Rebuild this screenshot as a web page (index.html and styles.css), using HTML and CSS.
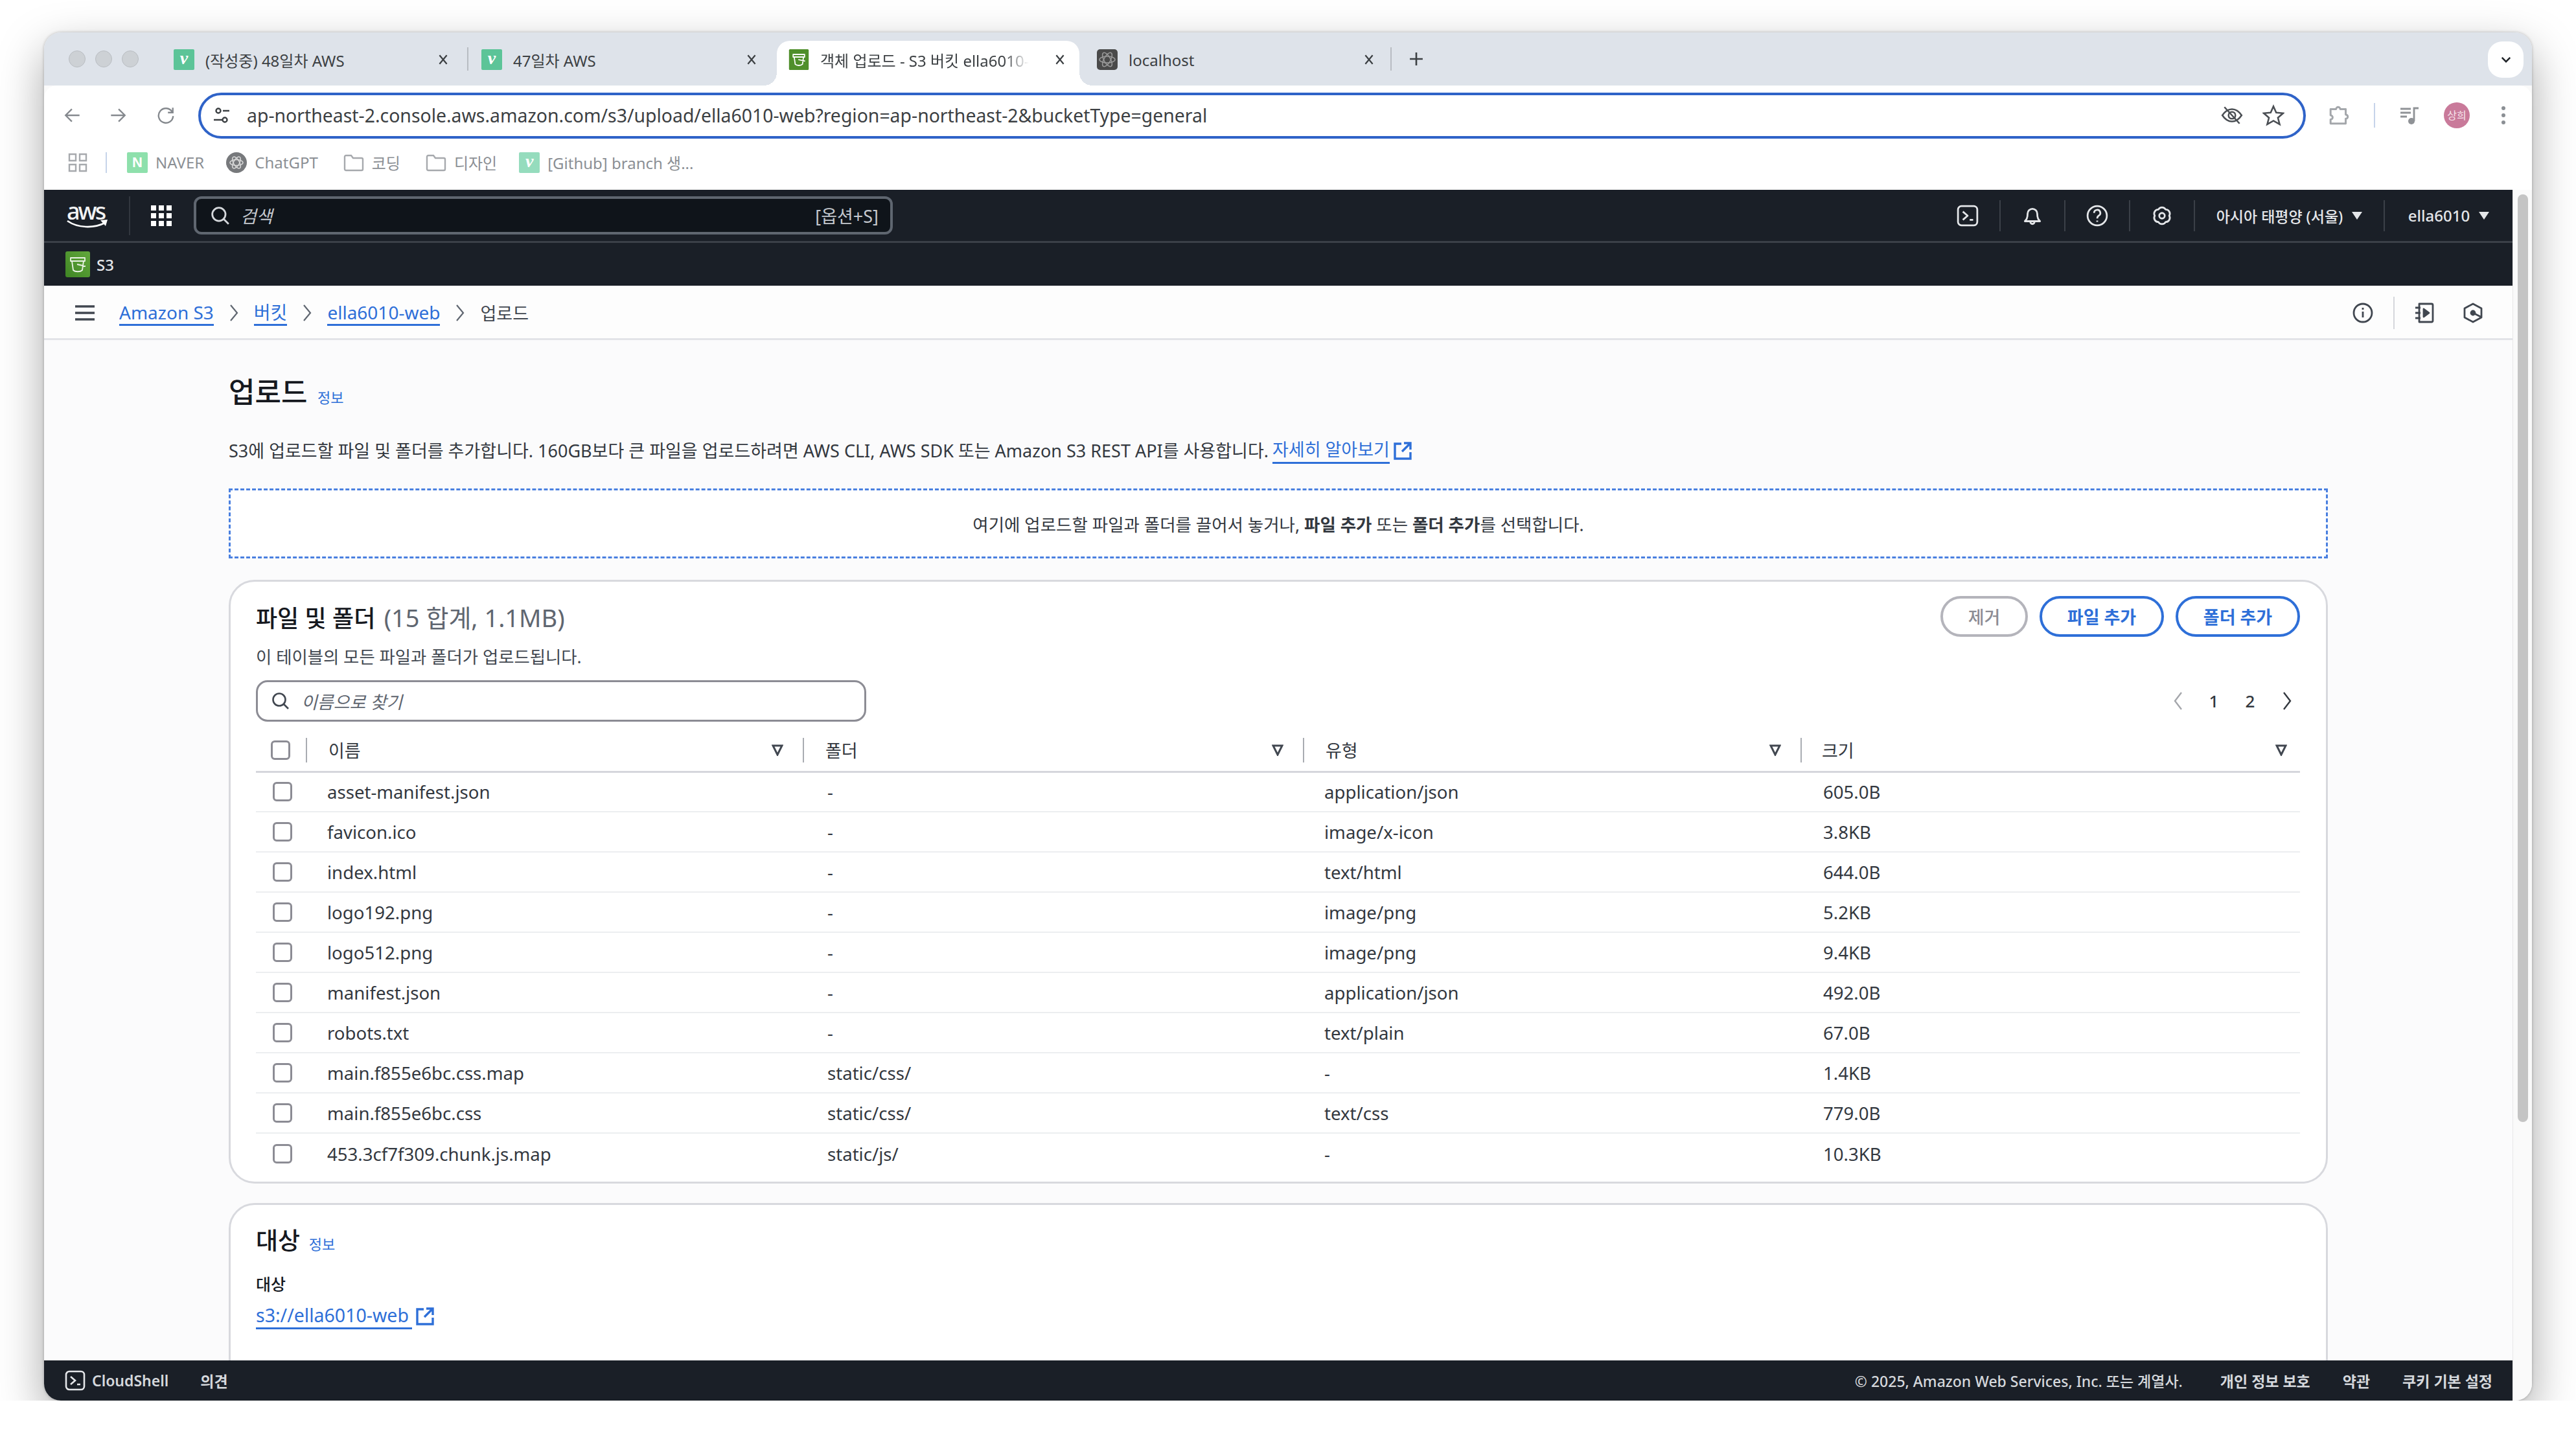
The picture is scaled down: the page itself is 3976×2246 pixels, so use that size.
FILE: index.html
```html
<!DOCTYPE html>
<html lang="ko">
<head>
    <meta charset="UTF-8">
    <title>객체 업로드 - S3 버킷 ella6010-web</title>
    <link rel="stylesheet" href="styles.css">
</head>
<body>

<div class="window">
    <!-- Browser tabs -->
    <div class="tabbar">
        <div class="lights"><span></span><span></span><span></span></div>
        <div class="tab tab-first">
            <span class="fav fav-v">v</span><span class="tab-title">(작성중) 48일차 AWS</span>
            <svg class="tab-x" viewBox="0 0 16 16"><path d="M3 2l10 12M13 2L3 14"/></svg>
        </div>
        <div class="tab-sep"></div>
        <div class="tab tab-second">
            <span class="fav fav-v">v</span><span class="tab-title">47일차 AWS</span>
            <svg class="tab-x" viewBox="0 0 16 16"><path d="M3 2l10 12M13 2L3 14"/></svg>
        </div>
        <div class="tab tab-active">
            <svg class="fav" viewBox="0 0 38 40"><rect width="38" height="40" rx="2" fill="#4f8f2b"/><path d="M8 10h22v5H8zM10 15l2 14c3 3 11 3 14 0l2-14M18 20l13 3" fill="none" stroke="#fff" stroke-width="2.200" stroke-linejoin="round"/></svg>
            <span class="tab-title tab-fade">객체 업로드 - S3 버킷 ella6010-</span>
            <svg class="tab-x" viewBox="0 0 16 16"><path d="M3 2l10 12M13 2L3 14"/></svg>
        </div>
        <div class="tab tab-last">
            <svg class="fav" viewBox="0 0 32 32"><rect width="32" height="32" rx="5" fill="#4a4a4a"/><g fill="none" stroke="#9a9a9a" stroke-width="1.500"><ellipse cx="16" cy="16" rx="12" ry="5"/><ellipse cx="16" cy="16" rx="12" ry="5" transform="rotate(60 16 16)"/><ellipse cx="16" cy="16" rx="12" ry="5" transform="rotate(120 16 16)"/></g></svg>
            <span class="tab-title">localhost</span>
            <svg class="tab-x" viewBox="0 0 16 16"><path d="M3 2l10 12M13 2L3 14"/></svg>
        </div>
        <div class="tab-sep"></div>
        <svg class="tab-plus" viewBox="0 0 20 20"><path d="M10 1v18M1 10h18"/></svg>
        <div class="tab-menu"><svg viewBox="0 0 16 16"><path d="M3 5.500l5 5 5-5"/></svg></div>
    </div>

    <!-- Toolbar with address bar -->
    <div class="toolbar">
        <svg class="tool-ico arrow" viewBox="0 0 28 28"><path d="M24 14H5M13 5l-9 9 9 9"/></svg>
        <svg class="tool-ico arrow" viewBox="0 0 28 28"><path d="M4 14h19M15 5l9 9-9 9"/></svg>
        <svg class="tool-ico reload" viewBox="0 0 28 28"><path d="M23 9a10.500 10.500 0 1 0 1.500 6M24 3v7h-7"/></svg>
        <div class="addressbar">
            <svg class="tune" viewBox="0 0 28 28"><circle cx="9" cy="7" r="3.500"/><circle cx="19" cy="21" r="3.500"/><path d="M16 7h10M2 21h13"/></svg>
            <span class="url">ap-northeast-2.console.aws.amazon.com/s3/upload/ella6010-web?region=ap-northeast-2&amp;bucketType=general</span>
            <svg class="addr-ico" viewBox="0 0 32 32"><path d="M2 16c4-6 9-9 14-9s10 3 14 9c-4 6-9 9-14 9S6 22 2 16z"/><circle cx="16" cy="16" r="5"/><path d="M5 4l22 24"/></svg>
            <svg class="addr-ico addr-star" viewBox="0 0 32 32"><path d="M16 3l4 9 10 1-7.500 6.500L25 29l-9-5-9 5 2.500-9.500L2 13l10-1z"/></svg>
        </div>
        <svg class="tool-ico puzzle" viewBox="0 0 32 32"><path d="M3 7h8a3 3 0 0 1 6 0h8v8a3 3 0 0 1 0 6v7H3v-6a3 3 0 0 0 0-6z"/></svg>
        <div class="tool-sep"></div>
        <svg class="tool-ico media" viewBox="0 0 32 32"><path d="M1 6h16M1 12h16M1 18h10M22 25V5h7"/><circle cx="18" cy="25" r="5" fill="#8f9296" stroke="none"/></svg>
        <div class="avatar">상희</div>
        <div class="dots"><span></span><span></span><span></span></div>
    </div>

    <!-- Bookmarks -->
    <div class="bookmarks">
        <svg class="bm-grid" viewBox="0 0 30 30"><path d="M2 2h10v10H2zM18 2h10v10H18zM2 18h10v10H2zM18 18h10v10H18z"/></svg>
        <div class="bm-sep"></div>
        <span class="bm"><span class="fav fav-n">N</span>NAVER</span>
        <span class="bm"><svg class="fav" viewBox="0 0 32 32"><circle cx="16" cy="16" r="16" fill="#77797c"/><g fill="none" stroke="#d8d8d8" stroke-width="1.500"><ellipse cx="16" cy="16" rx="10" ry="4.500"/><ellipse cx="16" cy="16" rx="10" ry="4.500" transform="rotate(60 16 16)"/><ellipse cx="16" cy="16" rx="10" ry="4.500" transform="rotate(120 16 16)"/></g></svg>ChatGPT</span>
        <span class="bm bm-dir"><svg class="bm-folder" viewBox="0 0 32 28"><path d="M2 5a2 2 0 0 1 2-2h8l3 4h13a2 2 0 0 1 2 2v15a2 2 0 0 1-2 2H4a2 2 0 0 1-2-2z"/></svg>코딩</span>
        <span class="bm bm-dir"><svg class="bm-folder" viewBox="0 0 32 28"><path d="M2 5a2 2 0 0 1 2-2h8l3 4h13a2 2 0 0 1 2 2v15a2 2 0 0 1-2 2H4a2 2 0 0 1-2-2z"/></svg>디자인</span>
        <span class="bm"><span class="fav fav-v fav-pale">v</span>[Github] branch 생...</span>
    </div>

    <!-- AWS console nav -->
    <div class="aws-top">
        <div class="aws-logo">aws<svg viewBox="0 0 64 16"><path d="M1 2c16 11 40 12 58 3" fill="none" stroke="#fff" stroke-width="2.600"/><path d="M52 1l11-1-3 10z" fill="#fff"/></svg></div>
        <div class="nav-rule"></div>
        <svg class="apps" viewBox="0 0 32 32"><path d="M0 0h8v8H0zM12 0h8v8h-8zM24 0h8v8h-8zM0 12h8v8H0zM12 12h8v8h-8zM24 12h8v8h-8zM0 24h8v8H0zM12 24h8v8h-8zM24 24h8v8h-8z"/></svg>
        <div class="aws-search">
            <svg class="search-ico" viewBox="0 0 28 28"><circle cx="12" cy="12" r="9.500"/><path d="M19 19l7 7"/></svg>
            <em>검색</em>
            <span class="shortcut">[옵션+S]</span>
        </div>
        <div class="nav-right">
            <div class="nav-item"><svg class="nav-ico" viewBox="0 0 32 32"><rect x="2" y="2" width="28" height="28" rx="5"/><path d="M9 10l7 6-7 6M19 22h5"/></svg></div>
            <div class="nav-item"><svg class="nav-ico" viewBox="0 0 32 32"><path d="M5 24c2-2 4-4 4-11a7 7 0 0 1 14 0c0 7 2 9 4 11zM13 24v1a3 3 0 0 0 6 0v-1"/></svg></div>
            <div class="nav-item"><svg class="nav-ico" viewBox="0 0 32 32"><circle cx="16" cy="16" r="14"/><path d="M11.500 12a4.500 4.500 0 1 1 6.500 4c-1.500 1-2 2-2 4M16 23v2"/></svg></div>
            <div class="nav-item"><svg class="nav-ico" viewBox="0 0 32 32"><path d="M10.750 6.900A6 6 0 0 1 21.250 6.900A6 6 0 0 1 26.500 16A6 6 0 0 1 21.250 25.100A6 6 0 0 1 10.750 25.100A6 6 0 0 1 5.500 16A6 6 0 0 1 10.750 6.900z"/><circle cx="16" cy="16" r="4"/></svg></div>
            <div class="nav-item nav-region">아시아 태평양 (서울)<i class="caret"></i></div>
            <div class="nav-item nav-user">ella6010<i class="caret"></i></div>
        </div>
    </div>
    <div class="aws-service">
        <svg class="s3-ico" viewBox="0 0 38 40"><defs><linearGradient id="s3green" x1="0" y1="1" x2="1" y2="0"><stop offset="0" stop-color="#3f8624"/><stop offset="1" stop-color="#62a83c"/></linearGradient></defs><rect width="38" height="40" rx="3" fill="url(#s3green)"/><path d="M8 10h22v5H8zM10 15l2 14c3 3 11 3 14 0l2-14M18 20l13 3" fill="none" stroke="#e9f2e4" stroke-width="1.800" stroke-linejoin="round"/></svg>
        <span>S3</span>
    </div>

    <!-- Breadcrumb -->
    <div class="crumbs">
        <svg class="burger" viewBox="0 0 30 24"><path d="M0 2h30M0 12h30M0 22h30"/></svg>
        <a class="crumb-link">Amazon S3</a>
        <svg class="crumb-arrow" viewBox="0 0 14 28"><path d="M2 2l10 12L2 26"/></svg>
        <a class="crumb-link">버킷</a>
        <svg class="crumb-arrow" viewBox="0 0 14 28"><path d="M2 2l10 12L2 26"/></svg>
        <a class="crumb-link">ella6010-web</a>
        <svg class="crumb-arrow" viewBox="0 0 14 28"><path d="M2 2l10 12L2 26"/></svg>
        <span class="crumb-now">업로드</span>
        <div class="crumb-tools">
            <svg class="crumb-ico" viewBox="0 0 32 32"><circle cx="16" cy="16" r="14"/><path d="M16 14v9M16 8v3"/></svg>
            <div class="crumb-sep"></div>
            <svg class="crumb-ico" viewBox="0 0 32 32"><path d="M8 2h19a2 2 0 0 1 2 2v24a2 2 0 0 1-2 2H8zM2 8h8M2 16h8M2 24h8"/><path d="M15 10l8 6-8 6z" fill="#414750"/></svg>
            <svg class="crumb-ico" viewBox="0 0 32 32"><path d="M16 2l13 7v14l-13 7-13-7V9z"/><path d="M16 16l12 6"/><circle cx="16" cy="16" r="3" fill="#414750"/></svg>
        </div>
    </div>

    <div class="body-wrap">
        <div class="main">
            <h1 class="page-title">업로드 <a class="info">정보</a></h1>
            <p class="page-desc">S3에 업로드할 파일 및 폴더를 추가합니다. 160GB보다 큰 파일을 업로드하려면 AWS CLI, AWS SDK 또는 Amazon S3 REST API를 사용합니다. <a class="link">자세히 알아보기</a><svg class="ext" viewBox="0 0 30 30"><path d="M13 4H3v23h24V17M17 3h10v10M27 3L14 16"/></svg></p>

            <div class="dropzone">여기에 업로드할 파일과 폴더를 끌어서 놓거나,&nbsp;<b>파일 추가</b>&nbsp;또는&nbsp;<b>폴더 추가</b>를 선택합니다.</div>

            <div class="card files-card">
                <div class="card-head">
                    <div>
                        <h2 class="card-title">파일 및 폴더 <span>(15 합계, 1.1MB)</span></h2>
                        <p class="card-desc">이 테이블의 모든 파일과 폴더가 업로드됩니다.</p>
                    </div>
                    <div class="card-actions">
                        <button class="btn btn-off">제거</button>
                        <button class="btn">파일 추가</button>
                        <button class="btn">폴더 추가</button>
                    </div>
                </div>

                <div class="filter-row">
                    <div class="filter">
                        <svg class="filter-ico" viewBox="0 0 28 28"><circle cx="12" cy="12" r="9.500"/><path d="M19 19l7 7"/></svg>
                        <em>이름으로 찾기</em>
                    </div>
                    <div class="pager">
                        <svg class="pager-arrow off" viewBox="0 0 16 30"><path d="M13 2L3 15l10 13"/></svg>
                        <span>1</span>
                        <span>2</span>
                        <svg class="pager-arrow" viewBox="0 0 16 30"><path d="M3 2l10 13L3 28"/></svg>
                    </div>
                </div>

                <table class="file-table">
                    <colgroup>
                        <col class="col-check"><col class="col-name"><col class="col-folder"><col class="col-type"><col>
                    </colgroup>
                    <thead>
                        <tr>
                            <th><span class="check head-check"></span></th>
                            <th><div class="th-cell">이름<svg class="sort" viewBox="0 0 18 18"><path d="M2 2h14L9 16z"/></svg></div></th>
                            <th><div class="th-cell">폴더<svg class="sort" viewBox="0 0 18 18"><path d="M2 2h14L9 16z"/></svg></div></th>
                            <th><div class="th-cell">유형<svg class="sort" viewBox="0 0 18 18"><path d="M2 2h14L9 16z"/></svg></div></th>
                            <th><div class="th-cell th-last">크기<svg class="sort" viewBox="0 0 18 18"><path d="M2 2h14L9 16z"/></svg></div></th>
                        </tr>
                    </thead>
                    <tbody>
                        <tr><td><span class="check"></span></td><td>asset-manifest.json</td><td>-</td><td>application/json</td><td>605.0B</td></tr>
                        <tr><td><span class="check"></span></td><td>favicon.ico</td><td>-</td><td>image/x-icon</td><td>3.8KB</td></tr>
                        <tr><td><span class="check"></span></td><td>index.html</td><td>-</td><td>text/html</td><td>644.0B</td></tr>
                        <tr><td><span class="check"></span></td><td>logo192.png</td><td>-</td><td>image/png</td><td>5.2KB</td></tr>
                        <tr><td><span class="check"></span></td><td>logo512.png</td><td>-</td><td>image/png</td><td>9.4KB</td></tr>
                        <tr><td><span class="check"></span></td><td>manifest.json</td><td>-</td><td>application/json</td><td>492.0B</td></tr>
                        <tr><td><span class="check"></span></td><td>robots.txt</td><td>-</td><td>text/plain</td><td>67.0B</td></tr>
                        <tr><td><span class="check"></span></td><td>main.f855e6bc.css.map</td><td>static/css/</td><td>-</td><td>1.4KB</td></tr>
                        <tr><td><span class="check"></span></td><td>main.f855e6bc.css</td><td>static/css/</td><td>text/css</td><td>779.0B</td></tr>
                        <tr><td><span class="check"></span></td><td>453.3cf7f309.chunk.js.map</td><td>static/js/</td><td>-</td><td>10.3KB</td></tr>
                    </tbody>
                </table>
            </div>

            <div class="card dest-card">
                <h2 class="dest-title">대상 <a class="info">정보</a></h2>
                <div class="dest-label">대상</div>
                <div class="dest-value"><a class="link">s3://ella6010-web</a><svg class="ext" viewBox="0 0 30 30"><path d="M13 4H3v23h24V17M17 3h10v10M27 3L14 16"/></svg></div>
            </div>
        </div>
    </div>

    <!-- Console footer -->
    <div class="footer">
        <svg class="foot-ico" viewBox="0 0 32 32"><rect x="2" y="2" width="28" height="28" rx="5"/><path d="M9 10l7 6-7 6M19 22h5"/></svg>
        <span class="foot-shell">CloudShell</span>
        <span class="foot-feedback">의견</span>
        <div class="foot-right">
            <span>© 2025, Amazon Web Services, Inc. 또는 계열사.</span>
            <span class="foot-strong foot-gap">개인 정보 보호</span>
            <span class="foot-strong">약관</span>
            <span class="foot-strong">쿠키 기본 설정</span>
        </div>
    </div>

    <div class="scrollbar"><div class="scroll-thumb"></div></div>
</div>

</body>
</html>
```

FILE: styles.css
```css
/* Basic Reset */
* {
    margin: 0;
    padding: 0;
    box-sizing: border-box;
}

body {
    font-family: "Noto Sans", "Noto Sans CJK KR", sans-serif;
    background-color: #fff;
    color: #16191f;
    padding: 50px 68px 0;
}

svg {
    display: block;
    flex: none;
    fill: none;
}

/* Browser window */
.window {
    position: relative;
    display: flex;
    flex-direction: column;
    width: 3840px;
    height: 2112px;
    border-radius: 26px;
    overflow: hidden;
    background-color: #fafafa;
    box-shadow: 0 28px 70px rgba(0, 0, 0, 0.35), 0 0 4px rgba(0, 0, 0, 0.25);
}

.tabbar {
    display: flex;
    height: 82px;
    padding-top: 13px;
    background-color: #dee3ea;
    flex: none;
}

.lights {
    display: flex;
    gap: 15px;
    width: 182px;
    padding: 15px 0 0 38px;
}

.lights span {
    width: 26px;
    height: 26px;
    border-radius: 50%;
    background-color: #cdd1d5;
    border: 1px solid #b9bdc2;
}

.tab {
    position: relative;
    display: flex;
    align-items: center;
    padding: 0 18px 11px;
    font-size: 24px;
    color: #3c4043;
}

.tab-first { width: 471px; padding-right: 27px; }
.tab-second { width: 476px; padding-right: 29px; padding-left: 20px; }
.tab-active {
    width: 467px;
    background-color: #fff;
    border-radius: 20px 20px 0 0;
    margin-right: 9px;
    padding-right: 20px;
}
.tab-last { width: 471px; padding-right: 23px; }

.tab-active::before,
.tab-active::after {
    content: "";
    position: absolute;
    bottom: 0;
    width: 20px;
    height: 20px;
}

.tab-active::before {
    left: -20px;
    background: radial-gradient(circle at 0 0, transparent 20px, #fff 20px);
}

.tab-active::after {
    right: -20px;
    background: radial-gradient(circle at 100% 0, transparent 20px, #fff 20px);
}

.tab-sep {
    width: 2px;
    height: 36px;
    margin-top: 10px;
    background-color: #b8bcc2;
    flex: none;
}

.fav {
    width: 32px;
    height: 32px;
    flex: none;
}

.fav-v, .fav-n {
    display: block;
    background-color: #5cc498;
    color: #fff;
    border-radius: 2px;
    text-align: center;
    font-family: "Liberation Serif", serif;
    font-style: italic;
    font-weight: 700;
    font-size: 28px;
    line-height: 28px;
}

.fav-n {
    background-color: #8ee0ac;
    font-family: "Liberation Sans", sans-serif;
    font-style: normal;
    font-size: 22px;
    line-height: 32px;
}

.fav-pale {
    background-color: #95dcbd;
}

.tab-title {
    flex: 1;
    margin-left: 17px;
    white-space: nowrap;
}

.tab-fade {
    -webkit-mask-image: linear-gradient(to right, #000 88%, transparent 100%);
    mask-image: linear-gradient(to right, #000 88%, transparent 100%);
    flex: none;
    margin-right: auto;
}

.tab-x {
    width: 18px;
    height: 18px;
    stroke: #3c4043;
    stroke-width: 2;
    margin-right: 1px;
}

.tab-plus {
    width: 22px;
    height: 22px;
    margin: 17px 0 0 27px;
    stroke: #3c4043;
    stroke-width: 2.400;
}

.tab-menu {
    display: flex;
    align-items: center;
    justify-content: center;
    width: 55px;
    height: 56px;
    margin: 1px 13px 0 auto;
    background-color: #fff;
    border-radius: 22px;
}

.tab-menu svg {
    width: 20px;
    height: 20px;
    stroke: #1f2328;
    stroke-width: 2;
}

/* Toolbar */
.toolbar {
    display: flex;
    align-items: center;
    height: 82px;
    margin-top: 0;
    padding: 10px 0 0;
    background-color: #fff;
    border-radius: 20px 20px 0 0;
    flex: none;
}

.tool-ico {
    stroke: #85898e;
    stroke-width: 2.200;
}

.arrow {
    width: 30px;
    height: 30px;
}

.arrow:first-child {
    margin-left: 29px;
    margin-right: 40px;
}

.reload {
    width: 30px;
    height: 30px;
    margin-left: 44px;
}

.addressbar {
    display: flex;
    align-items: center;
    width: 3253px;
    height: 71px;
    margin-left: 35px;
    padding: 0 29px 0 18px;
    border: 4px solid #2f63c8;
    border-radius: 36px;
}

.tune {
    width: 28px;
    height: 28px;
    stroke: #3c4043;
    stroke-width: 2.400;
}

.url {
    flex: 1;
    margin-left: 25px;
    font-size: 28.400px;
    color: #3c4043;
    white-space: nowrap;
}

.addr-ico {
    width: 34px;
    height: 34px;
    stroke: #4b4f54;
    stroke-width: 2.400;
}

.addr-star {
    margin-left: 30px;
}

.puzzle {
    width: 34px;
    height: 34px;
    margin-left: 35px;
    stroke: #a4a7ab;
    stroke-width: 2.800;
    stroke-linejoin: round;
}

.tool-sep {
    width: 2px;
    height: 38px;
    margin-left: 36px;
    background-color: #c6d4ea;
}

.media {
    width: 32px;
    height: 34px;
    margin-left: 38px;
    stroke: #8f9296;
    stroke-width: 2.800;
}

.avatar {
    width: 40px;
    height: 40px;
    margin-left: 36px;
    border-radius: 50%;
    background-color: #c97a9a;
    color: #f7e4ec;
    font-size: 16px;
    line-height: 40px;
    text-align: center;
}

.dots {
    display: flex;
    flex-direction: column;
    gap: 5px;
    margin-left: 49px;
}

.dots span {
    width: 6px;
    height: 6px;
    border-radius: 50%;
    background-color: #8b8f94;
}

/* Bookmarks */
.bookmarks {
    display: flex;
    align-items: center;
    height: 79px;
    padding-bottom: 6px;
    background-color: #fff;
    font-size: 24px;
    color: #8b8f94;
    flex: none;
}

.bm-grid {
    width: 30px;
    height: 30px;
    margin-left: 37px;
    stroke: #a6a9ad;
    stroke-width: 2.400;
}

.bm-sep {
    width: 2px;
    height: 32px;
    margin: 0 31px 0 28px;
    background-color: #c6d4ea;
}

.bm {
    display: flex;
    align-items: center;
    gap: 12px;
    margin-right: 34px;
    white-space: nowrap;
}

.bm-dir {
    margin-left: 5px;
}

.bm-folder {
    width: 32px;
    height: 30px;
    stroke: #a6a9ad;
    stroke-width: 2.400;
}

/* AWS console nav */
.aws-top {
    display: flex;
    align-items: center;
    height: 82px;
    width: 3810px;
    background-color: #1a1f27;
    border-bottom: 3px solid #3b4048;
    color: #e4e6e9;
    flex: none;
}

.aws-logo {
    position: relative;
    width: 64px;
    height: 40px;
    margin-left: 35px;
    font-size: 36px;
    font-weight: 500;
    line-height: 26px;
    letter-spacing: -3px;
    color: #f2f3f4;
}

.aws-logo svg {
    width: 64px;
    height: 16px;
}

.nav-rule {
    width: 2px;
    height: 60px;
    margin-left: 32px;
    background-color: #31363e;
}

.apps {
    width: 32px;
    height: 32px;
    margin-left: 32px;
    fill: #fff;
}

.aws-search {
    display: flex;
    align-items: center;
    width: 1079px;
    height: 59px;
    margin-left: 34px;
    padding: 0 18px 0 22px;
    background-color: #0f141a;
    border: 4px solid #5f6670;
    border-radius: 12px;
    font-size: 27px;
    color: #c4c8ce;
}

.search-ico {
    width: 30px;
    height: 30px;
    stroke: #d5d8dc;
    stroke-width: 2.600;
}

.aws-search em {
    flex: 1;
    margin-left: 16px;
}

.nav-right {
    display: flex;
    align-items: center;
    height: 48px;
    margin-left: auto;
}

.nav-item {
    display: flex;
    align-items: center;
    justify-content: center;
    width: 100px;
    height: 48px;
    border-right: 2px solid #3b4048;
    font-size: 24px;
    font-weight: 500;
}

.nav-ico {
    width: 34px;
    height: 34px;
    stroke: #e4e6e9;
    stroke-width: 2.600;
    stroke-linejoin: round;
}

.nav-region {
    width: 293px;
    font-size: 23px;
    white-space: nowrap;
}

.nav-user {
    width: 197px;
    border-right: 0;
}

.caret {
    width: 0;
    height: 0;
    margin-left: 14px;
    border-left: 8px solid transparent;
    border-right: 8px solid transparent;
    border-top: 12px solid #e4e6e9;
}

.aws-service {
    display: flex;
    align-items: center;
    height: 66px;
    width: 3810px;
    padding-left: 33px;
    background-color: #1a1f27;
    color: #e4e6e9;
    font-size: 24px;
    font-weight: 500;
    flex: none;
}

.aws-service span {
    margin-left: 10px;
}

.s3-ico {
    width: 38px;
    height: 40px;
}

/* Breadcrumb */
.crumbs {
    display: flex;
    align-items: center;
    width: 3810px;
    height: 84px;
    padding: 2px 0 0 48px;
    background-color: #fdfdfd;
    border-bottom: 3px solid #e3e4e8;
    font-size: 28px;
    flex: none;
}

.burger {
    width: 30px;
    height: 24px;
    margin-right: 38px;
    stroke: #414750;
    stroke-width: 3.500;
}

.crumb-link {
    color: #2e6fd8;
    border-bottom: 3px solid #2e6fd8;
    line-height: 36px;
    margin-top: 2px;
}

.crumb-arrow {
    width: 14px;
    height: 28px;
    margin: 0 24px;
    stroke: #5f6670;
    stroke-width: 2.200;
}

.crumb-now {
    font-size: 27px;
    color: #414750;
}

.crumb-tools {
    display: flex;
    align-items: center;
    margin-left: auto;
    padding-right: 45px;
}

.crumb-ico {
    width: 32px;
    height: 32px;
    stroke: #414750;
    stroke-width: 2.800;
    stroke-linejoin: round;
}

.crumb-ico:last-child {
    margin-left: 43px;
}

.crumb-sep {
    width: 2px;
    height: 50px;
    margin: 0 30px 0 31px;
    background-color: #d5d7dc;
}

/* Page body */
.body-wrap {
    flex: 1;
    width: 3810px;
    overflow: hidden;
    min-height: 0;
}

.main {
    padding: 50px 285px 0;
    background-color: #fbfbfc;
}

.page-title {
    font-size: 44px;
    font-weight: 500;
    line-height: 60px;
}

.info {
    margin-left: 4px;
    font-size: 22px;
    font-weight: 400;
    color: #2e6fd8;
}

.page-desc {
    margin-top: 33px;
    font-size: 27px;
    line-height: 40px;
    color: #33383f;
    display: flex;
    align-items: center;
    white-space: nowrap;
}

.link {
    color: #2e6fd8;
    border-bottom: 3px solid #2e6fd8;
    margin-left: 6px;
    line-height: 36px;
    padding-bottom: 1px;
}

.ext {
    width: 30px;
    height: 30px;
    margin-left: 5px;
    stroke: #2e6fd8;
    stroke-width: 3.400;
}

.dropzone {
    display: flex;
    align-items: center;
    justify-content: center;
    height: 108px;
    margin-top: 38px;
    background-color: #fff;
    border: 3px dashed #4a80e0;
    font-size: 26.500px;
    color: #33383f;
}

.card {
    background-color: #fff;
    border: 3px solid #d8d9de;
    border-radius: 40px;
    margin-top: 33px;
    padding: 0 40px 0 39px;
}

.card-head {
    display: flex;
    justify-content: space-between;
}

.card-title {
    margin-top: 30px;
    font-size: 36px;
    font-weight: 500;
    line-height: 50px;
}

.card-title span {
    margin-left: 4px;
    font-size: 38px;
    font-weight: 400;
    color: #5f6670;
}

.card-desc {
    margin-top: 14px;
    font-size: 26.400px;
    line-height: 40px;
    color: #414750;
}

.card-actions {
    display: flex;
    gap: 18px;
    margin-top: 22px;
    height: 63px;
}

.btn {
    height: 63px;
    width: 192px;
    border: 4px solid #2e6fd8;
    border-radius: 32px;
    background-color: #fff;
    color: #2e6fd8;
    font-family: inherit;
    font-size: 27px;
    font-weight: 700;
}

.btn-off {
    width: 135px;
    border-color: #b4b4bb;
    color: #8c8c94;
    font-weight: 500;
}

.filter-row {
    display: flex;
    justify-content: space-between;
    align-items: center;
    margin-top: 16px;
}

.filter {
    display: flex;
    align-items: center;
    width: 942px;
    height: 64px;
    padding-left: 21px;
    border: 3px solid #8c8c94;
    border-radius: 18px;
    font-size: 27px;
    color: #5f6670;
}

.filter-ico {
    width: 28px;
    height: 28px;
    stroke: #414750;
    stroke-width: 2.600;
}

.filter em {
    margin-left: 18px;
}

.pager {
    display: flex;
    align-items: center;
    font-size: 26px;
    font-weight: 500;
    color: #33383f;
}

.pager span {
    width: 56px;
    text-align: center;
}

.pager-arrow {
    width: 16px;
    height: 30px;
    stroke: #33383f;
    stroke-width: 2.400;
}

.pager-arrow.off {
    margin-right: 19px;
    stroke: #a4a6ab;
}

.pager-arrow:last-child {
    margin-left: 21px;
    margin-right: 12px;
}

/* File table */
.file-table {
    width: 100%;
    margin-top: 12px;
    border-collapse: collapse;
    table-layout: fixed;
    font-size: 27.600px;
    color: #33383f;
}

.col-check { width: 77px; }
.col-name { width: 767px; }
.col-folder { width: 772px; }
.col-type { width: 768px; }

.file-table th {
    height: 65px;
    padding: 0;
    border-bottom: 3px solid #d5d6dc;
    font-size: 27px;
    font-weight: 400;
    text-align: left;
}

.th-cell {
    display: flex;
    align-items: center;
    justify-content: space-between;
    height: 38px;
    padding: 0 30px 0 33px;
    border-left: 2px solid #a9acb2;
}

.th-last {
    padding-right: 20px;
    padding-left: 31px;
}

.sort {
    width: 18px;
    height: 18px;
    stroke: #414750;
    stroke-width: 3;
}

.file-table td {
    height: 62px;
    padding: 0 0 0 33px;
    border-bottom: 2px solid #eceef0;
    white-space: nowrap;
}

.file-table tr:last-child td {
    border-bottom: 0;
}

.file-table td:first-child {
    padding-left: 26px;
}

.file-table th:first-child {
    padding-left: 23px;
}

.file-table td:nth-child(3) {
    padding-left: 38px;
}

.file-table td:nth-child(5) {
    padding-left: 35px;
}

.check {
    display: block;
    width: 30px;
    height: 30px;
    border: 3px solid #8c8c94;
    border-radius: 6px;
    background-color: #fff;
}

.files-card {
    padding-bottom: 13px;
}

/* Destination */
.dest-card {
    height: 320px;
    margin-top: 30px;
}

.dest-title {
    margin-top: 30px;
    font-size: 37px;
    font-weight: 500;
    line-height: 50px;
}

.dest-label {
    margin-top: 17px;
    font-size: 25px;
    font-weight: 500;
    line-height: 40px;
}

.dest-value {
    display: flex;
    align-items: center;
    margin-top: 10px;
    font-size: 28.500px;
}

.dest-value .link {
    margin-left: 0;
    padding-right: 5px;
}

/* Footer */
.footer {
    display: flex;
    align-items: center;
    width: 3810px;
    height: 62px;
    padding-left: 32px;
    background-color: #1a1f27;
    color: #d5d8dc;
    font-size: 23px;
    font-weight: 500;
    flex: none;
}

.foot-ico {
    width: 32px;
    height: 32px;
    stroke: #e4e6e9;
    stroke-width: 2.600;
}

.foot-shell {
    margin-left: 10px;
    font-weight: 600;
}

.foot-feedback {
    margin-left: 49px;
    font-weight: 600;
}

.foot-right {
    display: flex;
    gap: 50px;
    margin-left: auto;
    padding-right: 31px;
}

.foot-strong {
    font-weight: 700;
}

.foot-gap {
    margin-left: 8px;
}

/* Scrollbar sits over the right edge of the window */
.scrollbar {
    position: absolute;
    top: 243px;
    right: 0;
    bottom: 0;
    width: 30px;
    background-color: #fafafa;
    border-left: 1px solid #e8e8e8;
}

.scroll-thumb {
    width: 16px;
    height: 1432px;
    margin: 7px 0 0 7px;
    border-radius: 8px;
    background-color: #c4c4c4;
}
```
